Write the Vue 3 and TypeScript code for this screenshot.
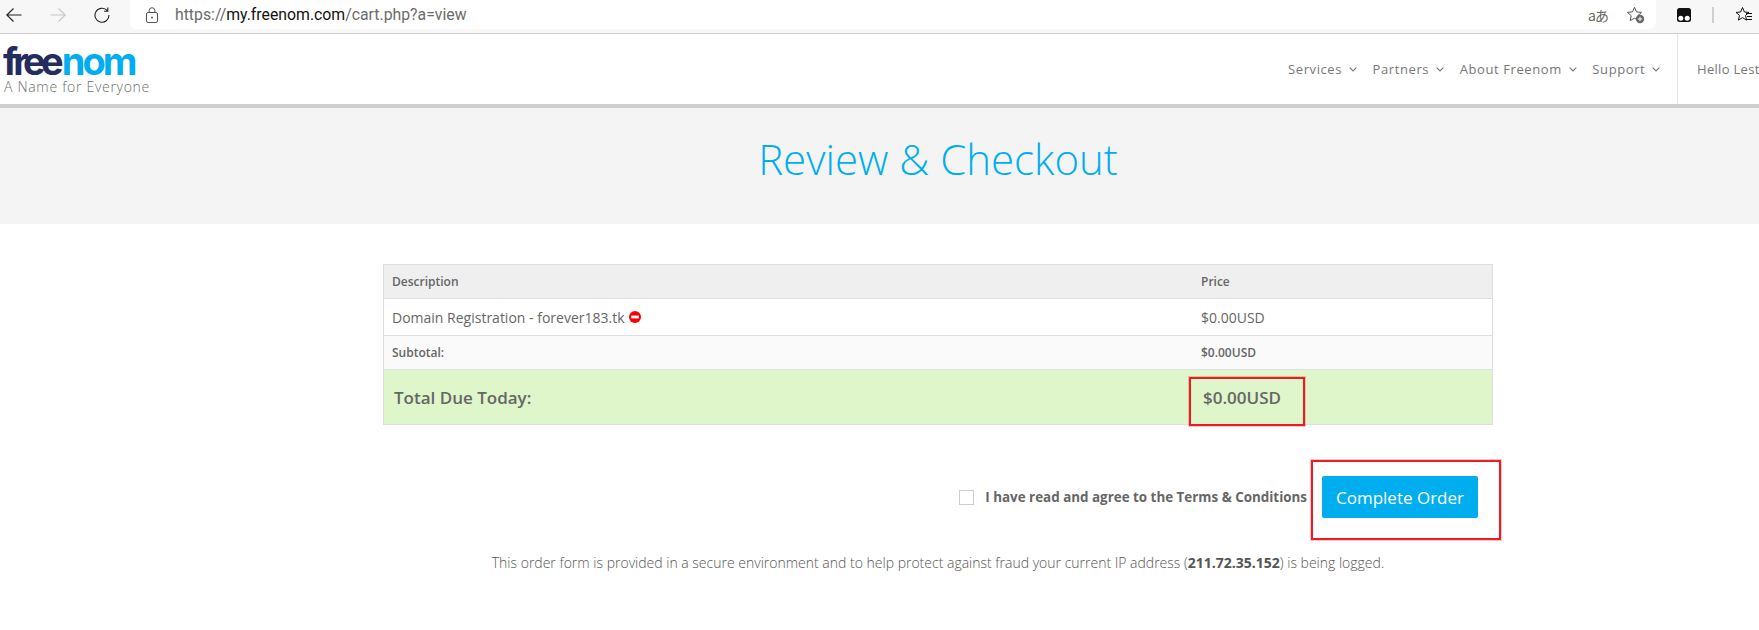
<script setup lang="ts">
const nav: string[] = ['Services', 'Partners', 'About Freenom', 'Support']
</script>

<template>
  <div class="page">
    <div class="chrome">
      <div class="tool-group">
        <svg class="tool" viewBox="0 0 16 16" width="16" height="16"><path d="M15.500 8H.8M7.500 1.500.8 8l6.700 6.500" fill="none" stroke="#222" stroke-width="1.100"/></svg>
        <svg class="tool" viewBox="0 0 16 16" width="16" height="16"><path d="M.5 8h14.700M8.500 1.500 15.200 8l-6.700 6.500" fill="none" stroke="#c6c6c6" stroke-width="1.100"/></svg>
        <svg class="tool" viewBox="0 0 16 16" width="16" height="16"><path d="M13.300 3.700A7 7 0 1 0 15 8M13.800.5v3.700h-3.700" fill="none" stroke="#222" stroke-width="1.100"/></svg>
      </div>
      <div class="urlbar">
        <svg class="lock" viewBox="0 0 12 16" width="12" height="16"><rect x=".5" y="5.500" width="11" height="10" rx="1.500" fill="none" stroke="#555"/><path d="M3.200 5.500V3.500a2.800 2.800 0 0 1 5.600 0v2" fill="none" stroke="#555"/><circle cx="6" cy="10.500" r="1" fill="#555"/></svg>
        <span class="url"><span class="dim">https://</span>my.freenom.com<span class="dim">/cart.php?a=view</span></span>
        <span class="spring"></span>
        <span class="translate">aあ</span>
        <svg class="fav" viewBox="0 0 18 18" width="18" height="18"><path d="M7.500 1.300l2 4.600 5 .5-3.700 3.300 1 4.900-4.300-2.400-4.300 2.400 1-4.900L.5 6.400l5-.5z" fill="none" stroke="#555"/><circle cx="13" cy="13" r="4.200" fill="#666"/><path d="M13 10.800v4.400M10.800 13h4.400" stroke="#fff"/></svg>
      </div>
      <div class="tools-right">
        <svg viewBox="0 0 14 14" width="14" height="14"><rect width="14" height="14" rx="2.500" fill="#111"/><circle cx="3.800" cy="10.200" r="2.500" fill="#fff"/><circle cx="10.200" cy="10.200" r="2.500" fill="#fff"/></svg>
        <span class="sep"></span>
        <svg viewBox="0 0 18 18" width="18" height="18"><path d="M7.500 1.500l1.900 4.500 4.600.4-3.500 3 1.100 4.700-4.100-2.500-4.100 2.500 1.100-4.700-3.500-3 4.600-.4z" fill="none" stroke="#111"/><path d="M11 7.500h6M12 10.500h5M11 13.500h6" stroke="#111"/></svg>
      </div>
    </div>

    <header class="site-header">
      <div class="logo">
        <div class="wordmark"><span class="free">free</span><span class="nom">nom</span></div>
        <div class="tagline">A Name for Everyone</div>
      </div>
      <nav class="nav">
        <a v-for="item in nav" :key="item" class="nav-item">
          {{ item }}
          <svg viewBox="0 0 8 5" width="8" height="5"><path d="M.7.700 4 4 7.300.700" fill="none" stroke="#777" stroke-width="1.100"/></svg>
        </a>
      </nav>
      <div class="hello">Hello Lest</div>
    </header>

    <section class="hero"><h1>Review &amp; Checkout</h1></section>

    <main class="content">
      <div class="cart">
        <div class="row head"><div class="c1">Description</div><div class="c2">Price</div></div>
        <div class="row item">
          <div class="c1">Domain Registration - forever183.tk
            <svg class="remove" viewBox="0 0 12 12" width="12" height="12"><circle cx="6" cy="6" r="6" fill="#f00"/><rect x="2.200" y="4.600" width="7.600" height="2.800" fill="#fff"/></svg>
          </div>
          <div class="c2">$0.00USD</div>
        </div>
        <div class="row sub"><div class="c1">Subtotal:</div><div class="c2">$0.00USD</div></div>
        <div class="row total">
          <div class="c1">Total Due Today:</div>
          <div class="c2"><span class="mark-price"></span>$0.00USD</div>
        </div>
      </div>

      <div class="agree">
        <span class="check"></span>
        <span class="agree-text">I have read and agree to the Terms &amp; Conditions</span>
        <button class="order">Complete Order<span class="mark-order"></span></button>
      </div>

      <p class="note">This order form is provided in a secure environment and to help protect against fraud your current IP address (<b>211.72.35.152</b>) is being logged.</p>
    </main>
  </div>
</template>

<style>
html, body { margin: 0; background: #fff; overflow: hidden; }
</style>

<style scoped>
.page { width: 1759px; height: 630px; overflow: hidden; font-family: "Open Sans", sans-serif; color: #666; background: #fff; }
.chrome { height: 34px; box-sizing: border-box; background: #f7f7f7; border-bottom: 1px solid #ccc; display: flex; align-items: flex-start; }
.tool-group { width: 130px; height: 29px; padding-left: 6px; box-sizing: border-box; display: flex; align-items: center; gap: 28px; flex: none; }
.tool { flex: none; }
.urlbar { width: 1526px; height: 29px; box-sizing: border-box; background: #fff; border-radius: 0 0 6px 6px; display: flex; align-items: center; padding: 0 11px 0 16px; flex: none; }
.lock { margin-right: 17px; }
.url { font: 15.800px "Roboto", sans-serif; color: #111; }
.dim { color: #6b6b6b; }
.spring { flex: 1; }
.translate { font: 14px "Noto Sans CJK JP", sans-serif; color: #666; margin-right: 19px; letter-spacing: -1px; }
.tools-right { display: flex; align-items: center; gap: 21px; height: 29px; padding-left: 21px; }
.sep { width: 2px; height: 16px; background: #d0d0d0; }
.site-header { height: 74px; box-sizing: border-box; border-bottom: 4px solid #cfcfcf; display: flex; align-items: stretch; background: #fff; }
.logo { padding: 11px 0 0 3px; width: 1280px; box-sizing: border-box; flex: none; }
.wordmark { font: 700 38px/33px "Inter", sans-serif; height: 33px; white-space: nowrap; }
.free { color: #252d5f; letter-spacing: -4.800px; }
.nom { color: #00aeef; letter-spacing: -3px; margin-left: 3px; }
.tagline { font-size: 14px; line-height: 17px; letter-spacing: .7px; color: #6d6d6d; font-weight: 300; padding-left: 1px; }
.nav { width: 397px; flex: none; display: flex; align-items: center; gap: 15.500px; font-size: 13px; letter-spacing: .6px; color: #777; padding-left: 8px; box-sizing: border-box; }
.nav-item { display: flex; align-items: center; gap: 7px; white-space: nowrap; }
.hello { flex: 1; border-left: 1px solid #e6e6e6; padding: 21px 0 0 19px; font-size: 13px; letter-spacing: .3px; color: #777; white-space: nowrap; line-height: 29px; min-width: 0; }
.hero { height: 116px; background: #f4f4f4; display: flex; align-items: center; justify-content: center; padding-left: 117px; box-sizing: border-box; }
.hero h1 { margin: 0; font-size: 42px; font-weight: 300; color: #00aeef; padding-bottom: 15px; }
.content { width: 1110px; margin: 0 0 0 383px; padding-top: 40px; }
.cart { border: 1px solid #dedede; }
.row { display: flex; align-items: center; box-sizing: border-box; border-bottom: 1px solid #dedede; }
.row:last-child { border-bottom: 0; }
.c1 { width: 816px; flex: none; padding-left: 8px; box-sizing: border-box; display: flex; align-items: center; gap: 4px; white-space: nowrap; }
.c2 { padding-left: 1px; position: relative; white-space: nowrap; }
.head { height: 34px; background: #efefef; font-size: 12px; font-weight: 600; }
.item { height: 37px; font-size: 14px; }
.sub { height: 34px; background: #fafafa; font-size: 12px; font-weight: 600; }
.total { height: 54px; background: #dff5ca; font-size: 17px; font-weight: 600; }
.total .c1 { padding-left: 10px; }
.total .c2 { padding-left: 3px; }
.mark-price { position: absolute; left: -11px; top: -9px; width: 116px; height: 49px; box-sizing: border-box; border: 2px solid #ed1c24; box-shadow: 0 0 0 1px rgba(237, 28, 36, .25); pointer-events: none; }
.agree { height: 42px; margin-top: 51px; display: flex; align-items: center; justify-content: flex-end; padding-right: 15px; }
.check { width: 15px; height: 15px; box-sizing: border-box; border: 1px solid #ccc; margin-right: 11px; }
.agree-text { font-size: 13.400px; font-weight: 700; color: #666; margin-right: 15px; white-space: nowrap; }
.order { position: relative; width: 156px; height: 42px; padding: 0; border: 0; border-radius: 2px; background: #00aeef; color: #fff; font: 400 17px "Open Sans", sans-serif; }
.mark-order { position: absolute; left: -11px; top: -16px; width: 190px; height: 80px; box-sizing: border-box; border: 2px solid #ed1c24; box-shadow: 0 0 0 1px rgba(237, 28, 36, .25); pointer-events: none; }
.note { margin: 35px 0 0; text-align: center; font-size: 14px; font-weight: 300; color: #555; white-space: nowrap; line-height: 20px; }
.note b { font-weight: 700; }
</style>
